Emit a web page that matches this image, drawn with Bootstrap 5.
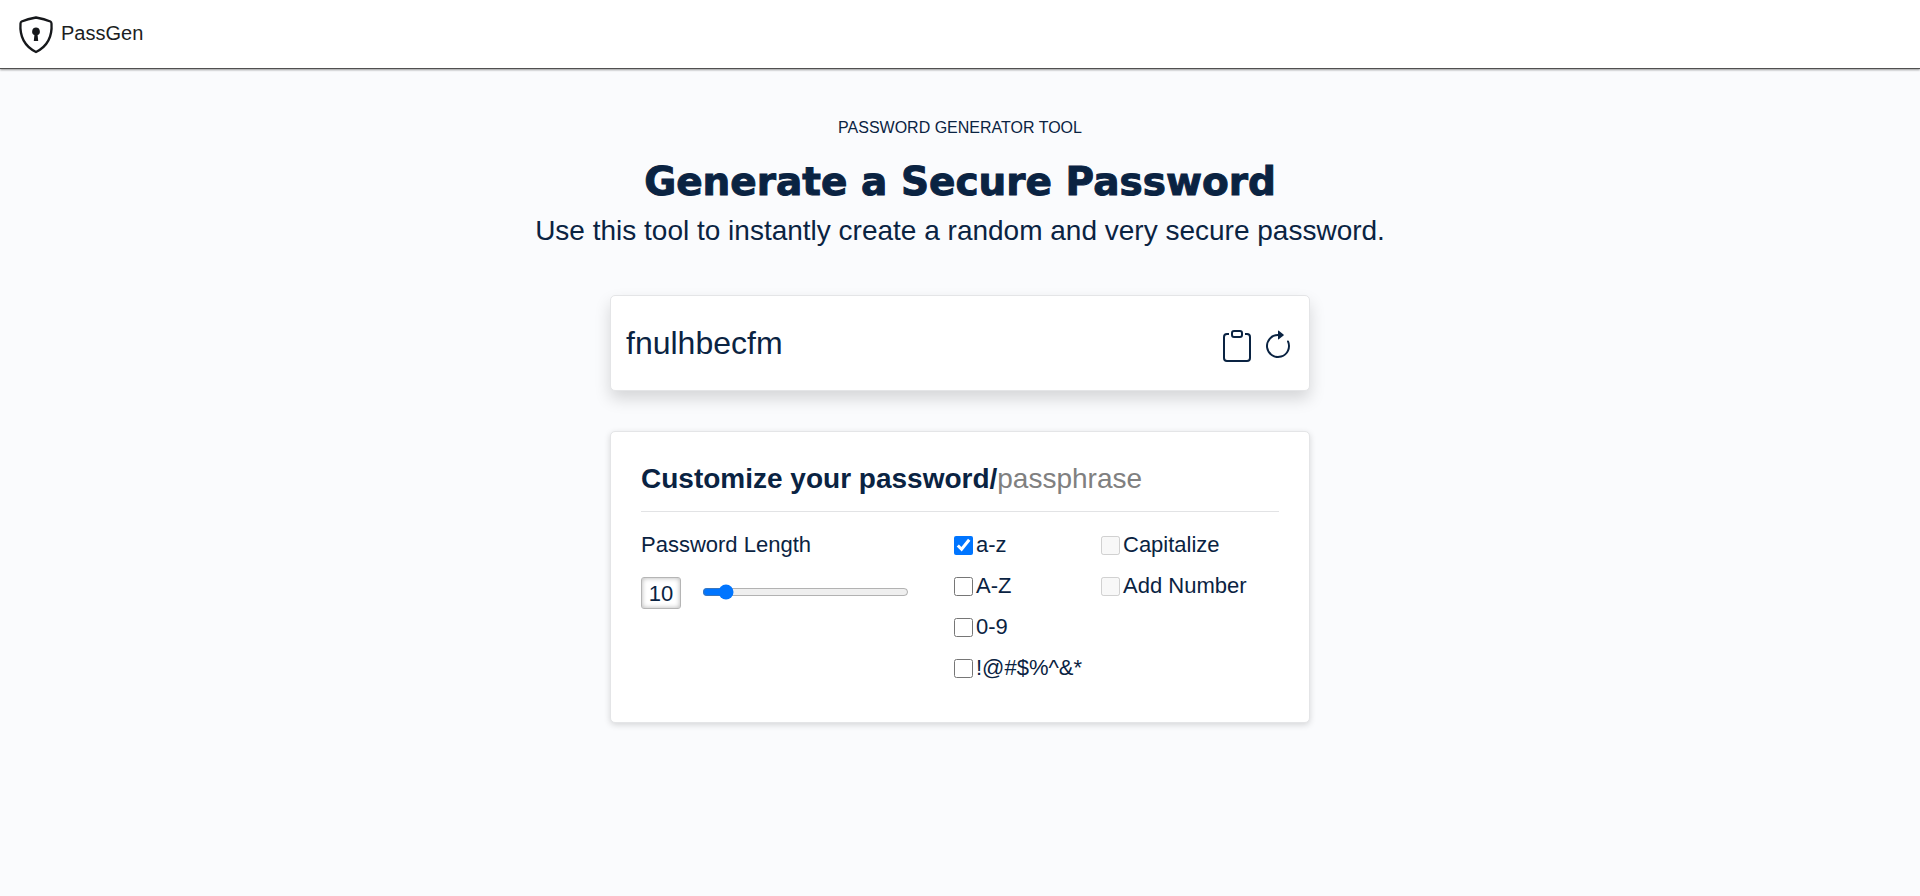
<!DOCTYPE html>
<html lang="en">
<head>
<meta charset="utf-8">
<meta name="viewport" content="width=device-width, initial-scale=1">
<title>PassGen</title>
<link href="https://cdn.jsdelivr.net/npm/bootstrap@5.3.0/dist/css/bootstrap.min.css" rel="stylesheet">
<style>
  body { background: #fafbfd; color: #0a2342; font-family: "Liberation Sans", Arial, sans-serif; }
  .topbar { height: 69px; background: #fff; border-bottom: 1px solid #505050; box-shadow: 0 1px 2px rgba(0,0,0,.4); }
  .brand-name { font-size: 20px; line-height: 30px; color: #1b1e22; margin-left: 5px; padding-bottom: 4px; }
  .intro { padding-top: 47px; }
  .eyebrow { font-size: 16px; line-height: 24px; }
  .hero-title { font-family: "DejaVu Sans", "Liberation Sans", sans-serif; font-weight: 700; font-size: 39px; line-height: 48px; margin-top: 18px; -webkit-text-stroke: 1px currentColor; }
  .hero-text { font-size: 28px; line-height: 42px; margin-top: 4px; }
  .panel { max-width: 700px; border-color: #e4e5e7; border-radius: 5px; color: inherit; }
  .result { height: 96px; margin-top: 43px; padding: 0 15px; box-shadow: 0 8px 16px rgba(0,0,0,.15); }
  .result output { font-size: 32px; line-height: 48px; }
  .options { margin-top: 40px; padding: 30px 30px 38px; box-shadow: 0 2px 6px rgba(0,0,0,.15); }
  .options-title { font-size: 28px; line-height: 34px; padding-bottom: 15px; border-bottom: 1px solid #e2e3e5; }
  .options-title a { color: #808080; }
  .options, .length-box { font-size: 22px; }
  .options label { line-height: 33px; }
  .settings { display: grid; grid-template-columns: 313px 147px 1fr; margin-top: 16px; }
  .length-box { width: 40px; height: 32px; border: 1px solid #b5b5b5; border-radius: 3px; box-shadow: inset 0 0 5px rgba(0,0,0,.3); color: inherit; text-align: center; padding: 0; }
  .length-range { width: 207px; height: 16px; margin: 0 0 2px 21px; accent-color: #0075ff; }
  .tick { width: 19px; height: 19px; margin: 1px 3px 0 0; accent-color: #0075ff; }
  .icon-btn { color: #0a2342; line-height: 0; }
</style>
</head>
<body class="min-vh-100">
<nav class="topbar d-flex align-items-start px-3">
  <a href="#" class="d-flex align-items-center text-decoration-none pt-3">
    <svg width="40" height="38" viewBox="0 0 40 38" fill="none" aria-hidden="true">
      <path d="M20 1.500C14.500 2.600 9.200 4.100 5.600 5.500Q4.600 6 4.500 7.500C3.700 19 7 29.500 20 36C33 29.500 36.300 19 35.500 7.500Q35.400 6 34.400 5.500C30.800 4.100 25.500 2.600 20 1.500Z" stroke="#16181b" stroke-width="2.300" stroke-linejoin="round"/>
      <path d="M20 11.500a4 4 0 0 1 1.600 7.600l.6 5.900h-4.400l.6-5.900A4 4 0 0 1 20 11.500z" fill="#16181b"/>
    </svg>
    <span class="brand-name">PassGen</span>
  </a>
</nav>

<main class="container-fluid pb-5">
  <header class="intro text-center">
    <p class="eyebrow text-uppercase mb-0">Password Generator Tool</p>
    <h1 class="hero-title mb-0">Generate a Secure Password</h1>
    <p class="hero-text mb-0">Use this tool to instantly create a random and very secure password.</p>
  </header>

  <section class="card panel result mx-auto flex-row align-items-center justify-content-between">
    <output>fnulhbecfm</output>
    <div class="d-flex align-items-start gap-2 pt-2">
      <button type="button" class="icon-btn btn p-0 border-0" aria-label="Copy password">
        <svg width="32" height="34" viewBox="0 0 32 34" fill="none" stroke="currentColor" stroke-width="2" aria-hidden="true">
          <path d="M7 4H5Q2 4 2 7V28Q2 31 5 31H25Q28 31 28 28V7Q28 4 25 4H23"/>
          <rect x="10" y="1" width="10" height="6" rx="2"/>
        </svg>
      </button>
      <button type="button" class="icon-btn btn p-0 border-0" aria-label="Generate a new password">
        <svg width="32" height="32" viewBox="0 0 16 16" fill="currentColor" aria-hidden="true">
          <path d="M8 3a5 5 0 1 0 4.546 2.914.5.5 0 0 1 .908-.417A6 6 0 1 1 8 2v1z"/>
          <path d="M8 4.466V.534a.25.25 0 0 1 .41-.192l2.360 1.966c.12.1.12.284 0 .384L8.410 4.658A.25.25 0 0 1 8 4.466z"/>
        </svg>
      </button>
    </div>
  </section>

  <section class="card panel options mx-auto">
    <h2 class="options-title fw-bold mb-0">Customize your password/<a href="#" class="fw-normal text-decoration-none">passphrase</a></h2>
    <form class="settings">
      <div>
        <label for="length">Password Length</label>
        <div class="d-flex align-items-center mt-3">
          <input id="length" class="length-box" type="text" value="10">
          <input class="length-range" type="range" min="5" max="64" value="10" aria-label="Password length">
        </div>
      </div>
      <div class="d-flex flex-column gap-2">
        <div class="d-flex align-items-center"><input class="tick" type="checkbox" id="lower" checked><label for="lower">a-z</label></div>
        <div class="d-flex align-items-center"><input class="tick" type="checkbox" id="upper"><label for="upper">A-Z</label></div>
        <div class="d-flex align-items-center"><input class="tick" type="checkbox" id="digits"><label for="digits">0-9</label></div>
        <div class="d-flex align-items-center"><input class="tick" type="checkbox" id="symbols"><label for="symbols">!@#$%^&amp;*</label></div>
      </div>
      <div class="d-flex flex-column gap-2">
        <div class="d-flex align-items-center"><input class="tick" type="checkbox" id="capitalize" disabled><label for="capitalize">Capitalize</label></div>
        <div class="d-flex align-items-center"><input class="tick" type="checkbox" id="number" disabled><label for="number">Add Number</label></div>
      </div>
    </form>
  </section>
</main>
<script src="https://cdn.jsdelivr.net/npm/bootstrap@5.3.0/dist/js/bootstrap.bundle.min.js"></script>
</body>
</html>
